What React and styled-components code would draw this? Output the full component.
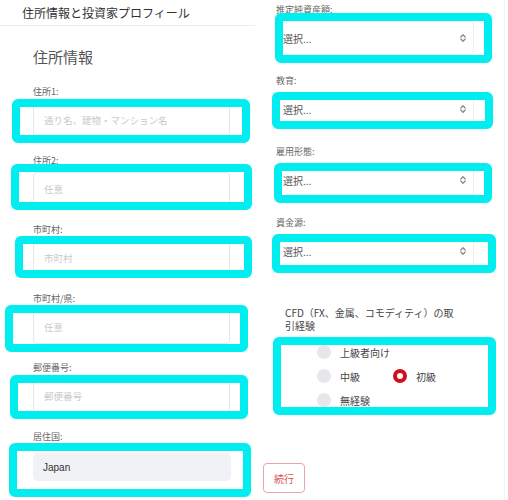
import React from "react";
import styled, { createGlobalStyle } from "styled-components";

const GlobalStyle = createGlobalStyle`
  body {
    margin: 0;
    background: #fff;
    font-family: "Noto Sans CJK JP", "Noto Sans", sans-serif;
  }
`;

const Page = styled.div`
  width: 508px;
  height: 500px;
  overflow: hidden;
  display: grid;
  grid-template-columns: 255px 253px;
  background: #fff;
`;

const LeftColumn = styled.div`
  display: flex;
  flex-direction: column;
`;

const TopBar = styled.div`
  height: 25px;
  display: flex;
  align-items: center;
  padding-left: 22px;
  border-bottom: 1px solid #ececec;
  color: #333;
  font-size: 12px;
  font-weight: 400;
`;

const Card = styled.div`
  padding-left: 33px;
`;

const Heading = styled.h2`
  margin: 21px 0 19px;
  font-size: 15px;
  line-height: 20px;
  font-weight: 400;
  color: #555;
`;

const Field = styled.div`
  margin-bottom: ${(p) => p.$gap ?? 18}px;
`;

const Label = styled.div`
  font-size: 9px;
  line-height: 12px;
  color: #666;
`;

const Control = styled.div`
  position: relative;
  margin-top: ${(p) => p.$offset ?? 5}px;
  width: ${(p) => p.$width ?? 197}px;
`;

const TextInput = styled.div`
  box-sizing: border-box;
  height: 34px;
  border: 1px solid #e6e7ea;
  border-radius: 4px;
  padding-left: 10px;
  display: flex;
  align-items: center;
  font-size: 9.5px;
  color: #c8c9cc;
`;

const CountryInput = styled.div`
  box-sizing: border-box;
  height: 28px;
  width: 198px;
  border-radius: 5px;
  background: #f1f2f5;
  padding-left: 10px;
  display: flex;
  align-items: center;
  font-size: 10px;
  color: #333;
  font-family: "Liberation Sans", "Noto Sans CJK JP", sans-serif;
`;

const Highlight = styled.div`
  position: absolute;
  box-sizing: border-box;
  border: 8px solid #00eef0;
  border-radius: 6px;
  pointer-events: none;
  left: ${(p) => p.$l}px;
  top: ${(p) => p.$t}px;
  width: ${(p) => p.$w}px;
  height: ${(p) => p.$h}px;
`;

const RightColumn = styled.div`
  padding-left: 8px;
  border-right: 1px solid #f2f2f2;
  margin-right: 3px;
`;

const Fields = styled.div`
  padding: 4px 0 0 13px;
`;

const Select = styled.div`
  box-sizing: border-box;
  height: 34px;
  border: 1px solid #eeeff1;
  border-radius: 4px;
  padding: 0 6px 0 6px;
  display: flex;
  align-items: center;
  justify-content: space-between;
  font-size: 10px;
  color: #555;
`;

const Question = styled.div`
  margin: 38px 0 8px 9px;
  width: 170px;
  font-size: 10px;
  line-height: 13px;
  font-weight: 400;
  color: #444;
`;

const RadioGroup = styled.div`
  position: relative;
  padding-left: 41px;
`;

const RadioRow = styled.div`
  height: 24px;
  display: flex;
  align-items: center;
`;

const RadioItem = styled.div`
  display: flex;
  align-items: center;
  gap: 9px;
  width: ${(p) => (p.$wide ? "76px" : "auto")};
  font-size: 10px;
  color: #444;
`;

const Dot = styled.span`
  box-sizing: border-box;
  width: 14px;
  height: 14px;
  border-radius: 50%;
  flex-shrink: 0;
  background: ${(p) => (p.$on ? "#fff" : "#e6e7eb")};
  border: ${(p) => (p.$on ? "4.5px solid #d0101a" : "none")};
`;

const ContinueButton = styled.button`
  margin-top: 51px;
  width: 42px;
  height: 30px;
  border: 1px solid #eaa6a6;
  border-radius: 4px;
  background: #fff;
  color: #d9534f;
  font-size: 10px;
  font-family: "Noto Sans CJK JP", sans-serif;
  padding: 0;
`;

const UpDown = () => (
  <svg width="8" height="10" viewBox="0 0 8 10" fill="none" stroke="#8a8a8a" strokeWidth="1.3" strokeLinecap="round" strokeLinejoin="round">
    <path d="M1.8 4 L4 1.8 L6.2 4" />
    <path d="M1.8 6 L4 8.2 L6.2 6" />
  </svg>
);

const addressFields = [
  { label: "住所1:", placeholder: "通り名、建物・マンション名", box: [-21, -4, 238, 44] },
  { label: "住所2:", placeholder: "任意", box: [-22, -8, 241, 46] },
  { label: "市町村:", placeholder: "市町村", box: [-18, -5, 237, 42] },
  { label: "市町村/県:", placeholder: "任意", box: [-28, -5, 243, 47] },
  { label: "郵便番号:", placeholder: "郵便番号", box: [-23, -4, 238, 44] },
];

const profileFields = [
  { label: "推定純資産額:", box: [-1, -8, 217, 50] },
  { label: "教育:", box: [-4, 0, 221, 37] },
  { label: "雇用形態:", box: [-2, 0, 218, 40] },
  { label: "資金源:", box: [-4, 0, 224, 39] },
];

const Frame = ({ box }) => <Highlight $l={box[0]} $t={box[1]} $w={box[2]} $h={box[3]} />;

export default function App() {
  return (
    <>
      <GlobalStyle />
      <Page>
        <LeftColumn>
          <TopBar>住所情報と投資家プロフィール</TopBar>
          <Card>
            <Heading>住所情報</Heading>
            {addressFields.map((f) => (
              <Field key={f.label}>
                <Label>{f.label}</Label>
                <Control>
                  <TextInput>{f.placeholder}</TextInput>
                  <Frame box={f.box} />
                </Control>
              </Field>
            ))}
            <Field>
              <Label>居住国:</Label>
              <Control $offset={10}>
                <CountryInput>Japan</CountryInput>
                <Frame box={[-24, -10, 242, 54]} />
              </Control>
            </Field>
          </Card>
        </LeftColumn>

        <RightColumn>
          <Fields>
            {profileFields.map((f) => (
              <Field key={f.label} $gap={20}>
                <Label>{f.label}</Label>
                <Control $width={198}>
                  <Select>
                    <span>選択...</span>
                    <UpDown />
                  </Select>
                  <Frame box={f.box} />
                </Control>
              </Field>
            ))}
            <Question>CFD（FX、金属、コモディティ）の取引経験</Question>
            <RadioGroup>
              <RadioRow>
                <RadioItem>
                  <Dot />
                  上級者向け
                </RadioItem>
              </RadioRow>
              <RadioRow>
                <RadioItem $wide>
                  <Dot />
                  中級
                </RadioItem>
                <RadioItem>
                  <Dot $on />
                  初級
                </RadioItem>
              </RadioRow>
              <RadioRow>
                <RadioItem>
                  <Dot />
                  無経験
                </RadioItem>
              </RadioRow>
              <Frame box={[-3, -3, 223, 78]} />
            </RadioGroup>
          </Fields>
          <ContinueButton>続行</ContinueButton>
        </RightColumn>
      </Page>
    </>
  );
}
